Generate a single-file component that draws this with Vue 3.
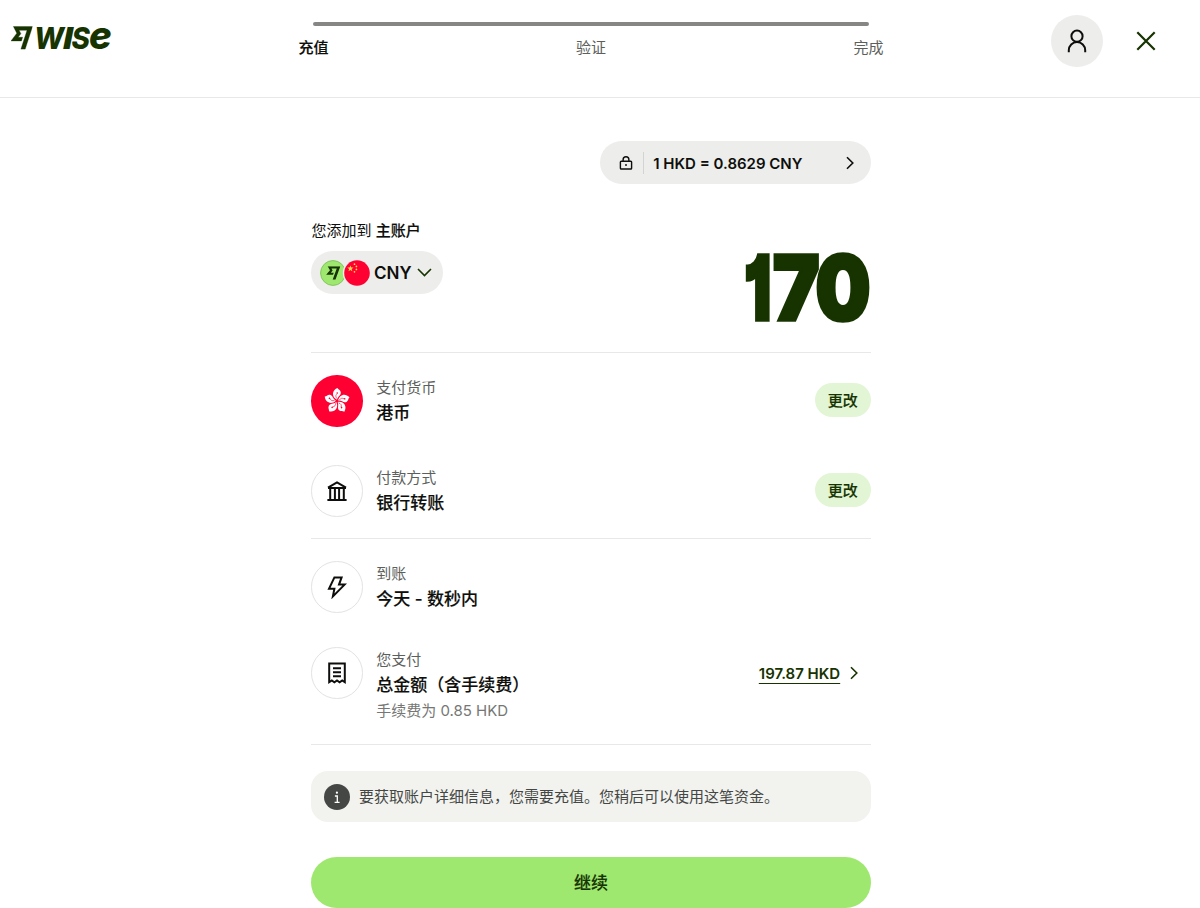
<template>
  <div class="page">
    <header class="header">
      <div class="brand">
        <svg class="brand-logo" viewBox="0 0 101 40" width="101" height="40">
          <svg x="0" y="4.2" width="21.6" height="23.2" viewBox="0 0.5 24 23" preserveAspectRatio="none">
            <path :d="flagPath" stroke="#163300" stroke-width="0.4" />
          </svg>
          <text x="23" y="26.8" font-size="30.5" textLength="30" lengthAdjust="spacingAndGlyphs">W</text>
          <text x="51.7" y="26.8" font-size="30.5" textLength="10.5" lengthAdjust="spacingAndGlyphs">I</text>
          <text x="60.6" y="26.8" font-size="30.5" textLength="18.4" lengthAdjust="spacingAndGlyphs">S</text>
          <text x="78" y="26.8" font-size="38.5" textLength="22.8" lengthAdjust="spacingAndGlyphs">e</text>
        </svg>
      </div>
      <nav class="stepper">
        <div class="stepper-bar"></div>
        <ol class="steps">
          <li v-for="(step, index) in steps" :key="step" :class="{ active: index === 0 }">{{ step }}</li>
        </ol>
      </nav>
      <div class="actions">
        <button class="avatar" aria-label="账户">
          <svg viewBox="0 0 20 24" width="20" height="24">
            <circle cx="10" cy="7.2" r="5.6" />
            <path d="M1.8 23.3v-2a8.2 8.2 0 0 1 16.4 0v2" />
          </svg>
        </button>
        <button class="close" aria-label="关闭">
          <svg viewBox="0 0 20 20" width="20" height="20">
            <path d="M1.3 1.3 18.7 18.7M18.7 1.3 1.3 18.7" />
          </svg>
        </button>
      </div>
    </header>

    <main class="content">
      <button class="rate">
        <svg class="lock" viewBox="0 0 14 14" width="14" height="14">
          <rect x="1.4" y="5.2" width="11.2" height="7.8" rx="0.8" />
          <path d="M4.1 5V3.7a2.9 2.9 0 0 1 5.8 0V5M7 8v2" />
        </svg>
        <span class="rate-text">1 HKD = 0.8629 CNY</span>
        <svg class="chevron" viewBox="0 0 8 14" width="8" height="14">
          <path d="M1 1.2 6.8 7 1 12.8" />
        </svg>
      </button>

      <section class="amount">
        <div class="amount-source">
          <p class="amount-label">您添加到 <strong>主账户</strong></p>
          <button class="currency">
            <svg class="flags" viewBox="0 0 50 26" width="50" height="26">
              <circle cx="13" cy="13" r="12.4" fill="#9fe870" stroke="#84c65c" />
              <svg x="6" y="6.2" width="14.5" height="13.6" viewBox="0 0.5 24 23">
                <path :d="flagPath" fill="#163300" />
              </svg>
              <circle cx="37" cy="13" r="14.2" fill="#ededeb" />
              <circle cx="37" cy="13" r="12.8" fill="#ff0033" />
              <path d="M30.4 5.4l.8 2.1 2.3.1-1.8 1.4.6 2.2-1.9-1.2-1.9 1.2.6-2.2-1.8-1.4 2.3-.1z" fill="#ffda44" />
              <circle v-for="star in stars" :key="star[1]" :cx="star[0]" :cy="star[1]" r="0.85" fill="#ffda44" />
            </svg>
            <span>CNY</span>
            <svg class="chevron-down" viewBox="0 0 15 9" width="15" height="9">
              <path d="M1 1 7.5 7.5 14 1" />
            </svg>
          </button>
        </div>
        <svg class="amount-value" viewBox="0 0 128 76" width="128" height="76">
          <text y="70">
            <tspan x="1.2" textLength="27" lengthAdjust="spacingAndGlyphs">1</tspan><tspan x="30" textLength="46.5" lengthAdjust="spacingAndGlyphs">7</tspan><tspan x="72.5" textLength="55" lengthAdjust="spacingAndGlyphs">0</tspan>
          </text>
        </svg>
      </section>

      <section class="group pay">
        <div v-for="row in payRows" :key="row.label" class="row">
          <div class="row-icon" :class="row.icon">
            <svg v-if="row.icon === 'hkd'" viewBox="-26 -26 52 52" width="52" height="52">
              <g v-for="n in 5" :key="n" :transform="`rotate(${n * 72 - 72})`">
                <path class="petal" d="M0-1.2C-5.4-4-5.4-10.5.4-13 1.2-11.4 3.4-11 3.8-8.8 4.2-5.6 1-5 0-1.2z" />
                <path class="stamen" d="M-.2-2.5C-1.6-4.5-1.5-6 .2-7.4" />
                <circle cx="0.2" cy="-8" r="0.8" fill="#ff0033" />
              </g>
            </svg>
            <svg v-else class="line-icon" viewBox="0 0 22 22" width="22" height="22">
              <path d="M1.4 20h19.2M2 7.9h18M2 7.7 11 2.4l9 5.3M4.2 8v12M8.9 8v12M13.1 8v12M17.8 8v12" />
            </svg>
          </div>
          <div class="row-text">
            <span class="row-label">{{ row.label }}</span>
            <span class="row-title">{{ row.title }}</span>
          </div>
          <button class="change">更改</button>
        </div>
      </section>

      <section class="group summary">
        <div class="row">
          <div class="row-icon">
            <svg class="line-icon" viewBox="0 0 22 24" width="22" height="24">
              <path d="M8.4 2.4h7.2L13 9.6h5.6L6.9 21.4l1.5-7.6H3z" />
            </svg>
          </div>
          <div class="row-text">
            <span class="row-label">到账</span>
            <span class="row-title">今天 - 数秒内</span>
          </div>
        </div>
        <div class="row">
          <div class="row-icon">
            <svg class="line-icon" viewBox="0 0 20 24" width="20" height="24">
              <path d="M2.2 21.2V2.4h15.6v18.8l-2.6-1.8-2.6 1.8-2.6-1.8-2.6 1.8-2.6-1.8zM6 7.2h8M6 11.2h8M6 15.2h8" />
            </svg>
          </div>
          <div class="row-text">
            <span class="row-label">您支付</span>
            <span class="row-title">总金额（含手续费）</span>
            <span class="row-note">手续费为 0.85 HKD</span>
          </div>
          <a class="total">
            <span>197.87 HKD</span>
            <svg class="chevron" viewBox="0 0 8 14" width="8" height="14">
              <path d="M1 1.2 6.8 7 1 12.8" />
            </svg>
          </a>
        </div>
      </section>

      <div class="notice">
        <svg viewBox="0 0 26 26" width="26" height="26">
          <circle cx="13" cy="13" r="13" fill="#454745" />
          <circle cx="12.9" cy="8.7" r="1.1" fill="#fff" />
          <path d="M10.9 12h2.4v6M10.6 18.3h5" fill="none" stroke="#fff" stroke-width="1.3" />
        </svg>
        <p>要获取账户详细信息，您需要充值。您稍后可以使用这笔资金。</p>
      </div>

      <button class="submit">继续</button>
    </main>
  </div>
</template>

<script setup>
const flagPath =
  'M6.488 7.469 0 15.05h11.585l1.301-3.576H7.922l3.033-3.507.01-.092L8.993 4.48h8.873l-6.878 18.925h4.706L24 .595H2.543l3.945 6.874Z'

const steps = ['充值', '验证', '完成']

const stars = [
  [34.5, 4.2],
  [36.4, 6.4],
  [36.4, 9.4],
  [34.5, 11.8]
]

const payRows = [
  { icon: 'hkd', label: '支付货币', title: '港币' },
  { icon: 'bank', label: '付款方式', title: '银行转账' }
]
</script>

<style>
body {
  background: #fff;
  overflow: hidden;
}
</style>

<style scoped>
.page {
  height: 908px;
  overflow: hidden;
  font-family: Inter, "Noto Sans CJK SC", sans-serif;
  font-size: 15px;
  color: #0e0f0c;
}

button {
  border: 0;
  padding: 0;
  font: inherit;
  color: inherit;
}

p {
  margin: 0;
}

svg {
  display: block;
  flex-shrink: 0;
}

.header {
  display: grid;
  grid-template-columns: 298.5px 585px 1fr;
  height: 97px;
  border-bottom: 1px solid #e8e9e7;
}

.brand {
  padding: 22px 0 0 11px;
}

.brand-logo {
  overflow: visible;
  fill: #163300;
  font-weight: 800;
  font-style: italic;
}

.stepper-bar {
  height: 4px;
  margin: 21.5px 14.5px 0 14.5px;
  border-radius: 2px;
  background: #868685;
}

.steps {
  display: flex;
  justify-content: space-between;
  margin: 10.5px 0 0;
  padding: 0;
  list-style: none;
  line-height: 24px;
  color: #5d5f5d;
}

.steps .active {
  color: #0e0f0c;
  font-weight: 500;
  -webkit-text-stroke: 0.15px;
}

.actions {
  display: flex;
  justify-content: flex-end;
  align-items: flex-start;
  gap: 33px;
  padding: 15px 44px 0 0;
}

.avatar {
  display: grid;
  place-items: center;
  width: 52px;
  height: 52px;
  border-radius: 50%;
  background: #ededeb;
}

.avatar svg,
.close svg {
  fill: none;
  stroke: #0e0f0c;
  stroke-width: 2;
}

.close {
  display: grid;
  place-items: center;
  height: 52px;
  background: none;
}

.close svg {
  stroke: #163300;
  stroke-width: 2.2;
}

.content {
  display: flex;
  flex-direction: column;
  width: 559.3px;
  margin: 43px 0 0 311.4px;
}

.rate {
  display: flex;
  align-items: center;
  align-self: flex-end;
  width: 270.5px;
  height: 43px;
  padding: 0 16.5px 0 19px;
  border-radius: 22px;
  background: #ededeb;
  box-sizing: border-box;
}

.lock {
  fill: none;
  stroke: #0e0f0c;
  stroke-width: 1.4;
}

.rate-text {
  flex: 1;
  height: 22px;
  margin-left: 10px;
  padding-left: 9px;
  border-left: 1px solid #d3d4d1;
  line-height: 23px;
  font-size: 15px;
  font-weight: 600;
  text-align: left;
}

.chevron,
.chevron-down {
  fill: none;
  stroke: #163300;
  stroke-width: 1.6;
}

.rate .chevron {
  stroke: #0e0f0c;
}

.amount {
  display: flex;
  justify-content: space-between;
  height: 134px;
  margin-top: 34px;
  border-bottom: 1px solid #e8e9e7;
}

.amount-label {
  line-height: 25px;
}

.amount-label strong {
  font-weight: 500;
  -webkit-text-stroke: 0.15px;
}

.currency {
  display: flex;
  align-items: center;
  width: 132px;
  height: 43px;
  margin-top: 8px;
  padding-left: 8.2px;
  border-radius: 22px;
  background: #ededeb;
  font-size: 17px;
  font-weight: 600;
  box-sizing: border-box;
}

.currency span {
  margin: 0 5.5px 0 4.5px;
}

.amount-value {
  margin-top: 32px;
  overflow: visible;
  font-size: 89px;
  font-weight: 900;
  font-feature-settings: "cv01";
  fill: #163300;
  stroke: #163300;
  stroke-width: 3.6;
}

.group {
  display: flex;
  flex-direction: column;
  border-bottom: 1px solid #e8e9e7;
}

.pay {
  gap: 39px;
  height: 163px;
  padding-top: 22px;
}

.summary {
  gap: 34px;
  height: 183px;
  padding-top: 22px;
}

.row {
  display: flex;
  align-items: flex-start;
  min-height: 51.5px;
}

.pay .row {
  height: 52px;
  margin-bottom: -0.6px;
}

.row-icon {
  display: grid;
  place-items: center;
  width: 51.5px;
  height: 51.5px;
  border: 1px solid #e2e3e1;
  border-radius: 50%;
  box-sizing: border-box;
}

.row-icon.hkd {
  border: 0;
  background: #ff0033;
}

.petal {
  fill: #fff;
}

.stamen {
  fill: none;
  stroke: #ff0033;
  stroke-width: 0.6;
}

.line-icon {
  fill: none;
  stroke: #0e0f0c;
  stroke-width: 2;
}

.row-text {
  display: flex;
  flex: 1;
  flex-direction: column;
  margin-left: 13.3px;
  line-height: 25px;
}

.row-label {
  line-height: 25px;
  color: #5d5f5d;
}

.row-title {
  line-height: 27px;
  font-size: 17px;
  font-weight: 500;
  -webkit-text-stroke: 0.15px;
}

.row-note {
  line-height: 24px;
  color: #767775;
}

.change {
  width: 56px;
  height: 34px;
  margin-top: 8px;
  padding-bottom: 1px;
  border-radius: 17px;
  background: #e2f6d5;
  color: #163300;
  font-weight: 500;
  -webkit-text-stroke: 0.15px;
}

.total {
  display: flex;
  align-items: center;
  gap: 10px;
  height: 52px;
  margin-right: 12.5px;
  color: #163300;
  font-weight: 600;
}

.total span {
  text-decoration: underline;
  text-underline-offset: 4px;
}

.notice {
  display: flex;
  align-items: center;
  gap: 9px;
  height: 51px;
  margin-top: 26px;
  padding-left: 12.7px;
  border-radius: 17px;
  background: #f2f3ef;
  color: #454745;
}

.notice p {
  padding-bottom: 2px;
}

.submit {
  height: 51px;
  margin-top: 35px;
  padding-bottom: 2px;
  border-radius: 26px;
  background: #9fe870;
  color: #163300;
  font-size: 17px;
  font-weight: 500;
  -webkit-text-stroke: 0.15px;
}
</style>
